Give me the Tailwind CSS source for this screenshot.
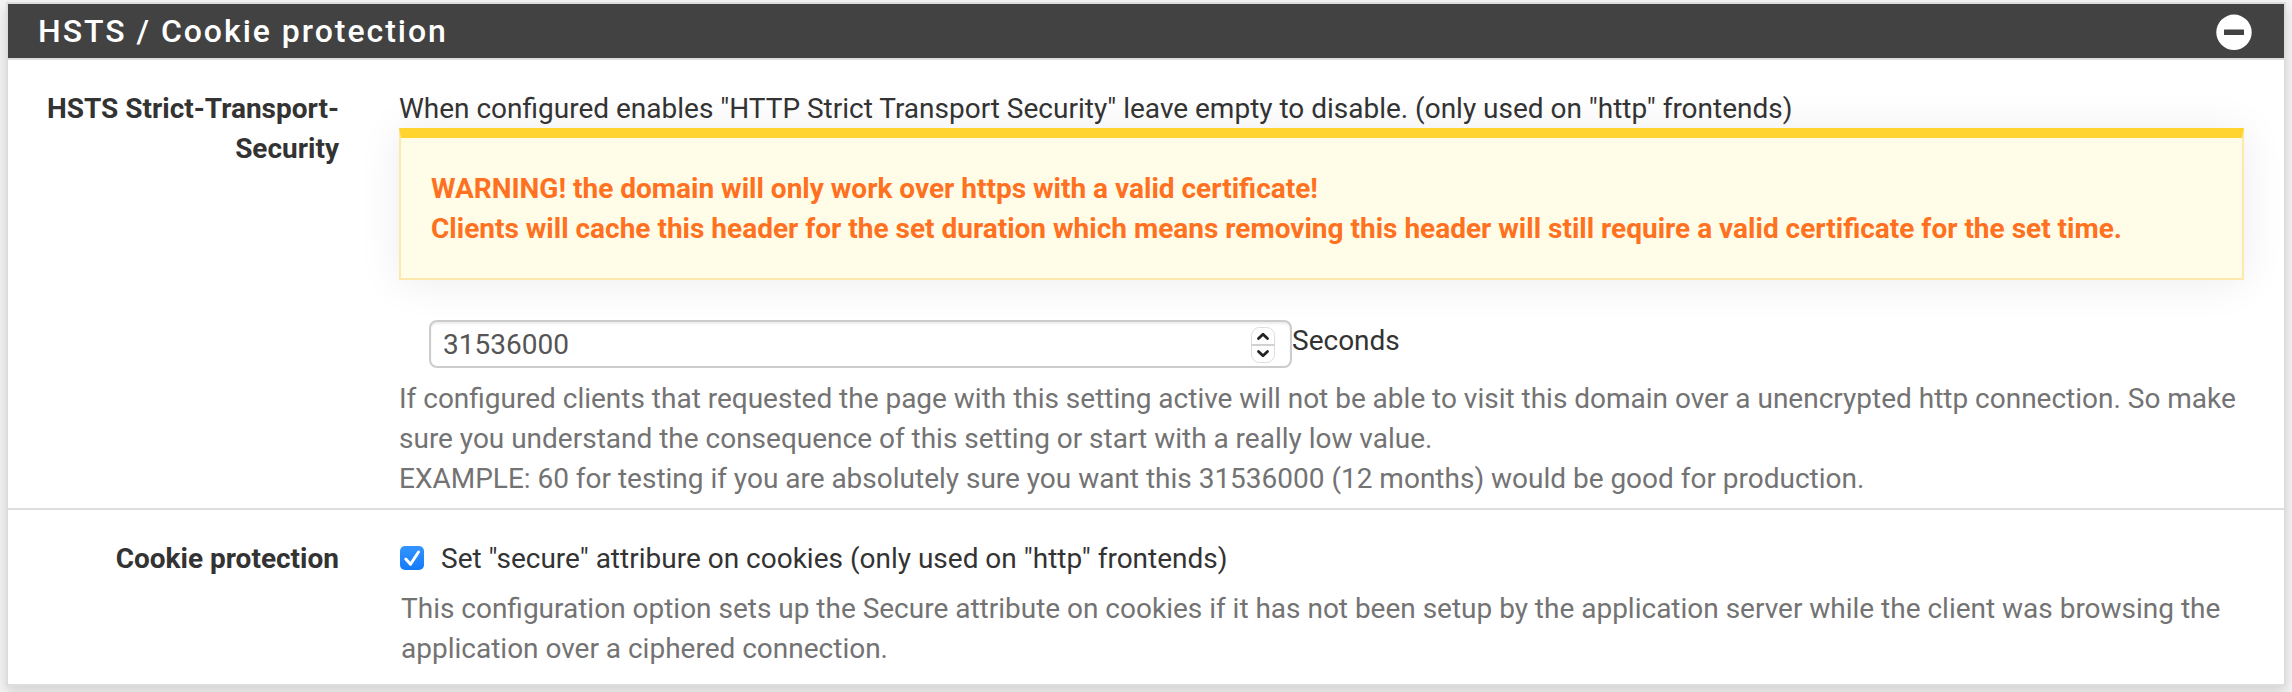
<!DOCTYPE html>
<html lang="en">
<head>
<meta charset="utf-8">
<title>HSTS / Cookie protection</title>
<script src="https://cdn.jsdelivr.net/npm/@tailwindcss/browser@4"></script>
</head>
<body class="h-[692px] overflow-hidden bg-[#f4f4f4] px-[6px] pt-[2px] font-[Roboto,sans-serif] text-[28px] leading-[40px] text-[#333]">
<section class="h-[684px] w-[2280px] border-2 border-[#ddd] bg-white shadow-[0_6px_12px_rgba(0,0,0,0.14)]">
  <header class="flex h-[56px] items-center justify-between border-b-2 border-[#ddd] bg-[#424242] pr-[32px] pl-[30px] text-white">
    <h2 class="text-[32px] leading-[54px] font-medium tracking-[1.97px]">HSTS / Cookie protection</h2>
    <svg class="mt-[2px] size-9" viewBox="0 0 36 36"><circle cx="18" cy="18.300" r="17.7" fill="#fff"/><rect x="8" y="15.500" width="20" height="5.5" rx=".6" fill="#424242"/></svg>
  </header>
  <div class="flex h-[450px] border-b-2 border-[#ddd] pt-[29px]">
    <div class="w-[331px] shrink-0 text-right font-bold">HSTS Strict-Transport-<br>Security</div>
    <div class="ml-[60px] w-[1845px]">
      <p class="h-[39px] whitespace-nowrap [word-spacing:-0.06px]">When configured enables "HTTP Strict Transport Security" leave empty to disable. (only used on "http" frontends)</p>
      <div class="h-[152px] border-2 border-t-[10px] border-[#ffe8ab] border-t-[#ffd42f] bg-[#fffde7] px-[30px] pt-[31px] font-bold whitespace-nowrap text-[#ff7021] shadow-[0_2px_40px_rgba(0,0,0,0.08)]">WARNING! the domain will only work over https with a valid certificate!<br>Clients will cache this header for the set duration which means removing this header will still require a valid certificate for the set time.</div>
      <div class="mt-[40px] ml-[30px] flex h-[59px] items-start">
        <div class="flex h-[48px] w-[863px] items-center justify-between rounded-[8px] border-2 border-[#ccc] bg-white pr-[13px] pl-[12px] text-[#555] shadow-[inset_0_2px_2px_rgba(0,0,0,0.075)]">
          <span class="pt-[2px]">31536000</span>
          <svg class="h-[40px] w-[28px]" viewBox="0 0 28 40"><rect x="2.5" y="3.5" width="23" height="35" rx="8" fill="#fff" stroke="#ddd"/><path d="M2.5 21h23" stroke="#ccc" stroke-width="1.8"/><path d="M9.500 14.500l4.500-4.300 4.500 4.300M9.500 27.500l4.500 4.300 4.500-4.300" fill="none" stroke="#222" stroke-width="2.800" stroke-linecap="round" stroke-linejoin="round"/></svg>
        </div>
        <span class="pt-px">Seconds</span>
      </div>
      <p class="whitespace-nowrap text-[#737373] [word-spacing:-0.06px]">If configured clients that requested the page with this setting active will not be able to visit this domain over a unencrypted http connection. So make<br>sure you understand the consequence of this setting or start with a really low value.<br>EXAMPLE: 60 for testing if you are absolutely sure you want this 31536000 (12 months) would be good for production.</p>
    </div>
  </div>
  <div class="flex pt-[29px]">
    <div class="w-[331px] shrink-0 text-right font-bold">Cookie protection</div>
    <div class="ml-[61px]">
      <div class="flex items-start gap-[17px] whitespace-nowrap">
        <svg class="mt-[7px] size-6" viewBox="0 0 24 24"><defs><linearGradient id="blue" x2="0" y2="1"><stop stop-color="#3395ff"/><stop offset="1" stop-color="#147afb"/></linearGradient></defs><rect width="24" height="24" rx="5" fill="url(#blue)"/><path d="M5.800 13l4.700 5.300L18.500 6" fill="none" stroke="#fff" stroke-width="3" stroke-linecap="round" stroke-linejoin="round"/></svg>
        <span>Set "secure" attribure on cookies (only used on "http" frontends)</span>
      </div>
      <p class="mt-[10px] ml-px whitespace-nowrap text-[#737373] [word-spacing:-0.06px]">This configuration option sets up the Secure attribute on cookies if it has not been setup by the application server while the client was browsing the<br>application over a ciphered connection.</p>
    </div>
  </div>
</section>
</body>
</html>
